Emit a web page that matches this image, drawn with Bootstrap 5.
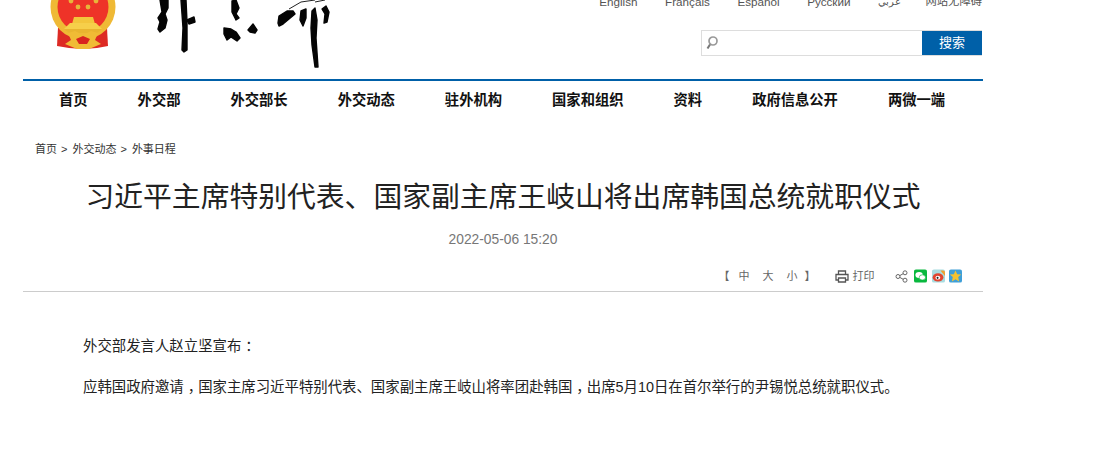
<!DOCTYPE html>
<html lang="zh-CN">
<head>
    <meta charset="UTF-8">
    <meta name="viewport" content="width=device-width, initial-scale=1.0">
    <title>习近平主席特别代表、国家副主席王岐山将出席韩国总统就职仪式</title>
    <link href="https://cdn.jsdelivr.net/npm/bootstrap@5.3.0/dist/css/bootstrap.min.css" rel="stylesheet">
    <style>
        body { font-family: "Liberation Sans", "Noto Sans CJK SC", sans-serif; color: #222; background: #fff; overflow: hidden; }
        a { color: inherit; text-decoration: none; }
        .page-wrap { width: 960px; margin-left: 23px; }
        .site-head { height: 81px; border-bottom: 2px solid #0060a8; overflow: hidden; }
        .brand-art { width: 320px; height: 79px; display: block; }
        .head-right { padding-right: 1px; }
        .lang-links { gap: 27.5px; margin-top: -7px; font-size: 11.7px; line-height: 17px; color: #555; }
        .lang-ar { font-size: 9.5px; margin-right: -3px; }
        .lang-cn { font-size: 11.3px; }
        .search-box { width: 281px; height: 26px; margin-top: 20px; border: 1px solid #ddd; border-right: 0; }
        .search-input { width: 0; border: 0; outline: 0; min-width: 0; }
        .search-btn { width: 60px; background: #0060a8; color: #fff; font-size: 13px; border: 0; padding: 0; }
        .main-menu { gap: 50px; padding-left: 36px; height: 40px; font-size: 14.3px; font-weight: 700; color: #111; }
        .crumbs { margin-top: 20px; padding-left: 12px; font-size: 11px; line-height: 16px; color: #333; }
        .crumb-sep { margin: 0 5px 0 4px; }
        .news-title { margin: 20px 0 0; font-size: 28.8px; line-height: 40px; font-weight: 400; color: #222; }
        .news-date { margin-top: 14px; font-size: 13.8px; line-height: 18px; color: #777; }
        .tool-row { height: 31px; padding-right: 21px; margin-top: 12px; border-bottom: 1px solid #ccc; font-size: 11px; color: #666; }
        .size-links { gap: 13px; margin-right: 19px; }
        .bracket-l { margin-right: -4px; }
        .bracket-r { margin-left: -6px; }
        .print-link { gap: 4px; margin-right: 20px; }
        .share-icons { gap: 4.5px; }
        .share-mark { margin-right: 2px; }
        .news-body { padding: 44px 0 0 60px; font-size: 14.4px; line-height: 21px; color: #222; }
        .news-body p { margin-bottom: 20px; }
        .mid-punct { padding-left: 4px; margin-right: -4px; }
    </style>
</head>
<body>
    <div class="page-wrap">
        <header class="site-head d-flex justify-content-between">
            <svg class="brand-art" viewBox="0 0 320 79" aria-label="外交部">
                <!-- emblem -->
                <path d="M35 28 L34 46 L46 48 L60 49 L74 48 L85 46 L84 28 Z" fill="#dd2a24"/>
                <circle cx="60" cy="7" r="32.5" fill="#efb935"/>
                <circle cx="60" cy="7" r="25.5" fill="#ee3328"/>
                <path d="M51 17 H70 L72 24 H51 L49 24Z" fill="#f3c53c"/>
                <path d="M47 23 H73 L79 29 H41Z" fill="#f6cf4a"/>
                <path d="M41 29 H79 L74 33 H46Z" fill="#e9b42f"/>
                <path d="M45 33 L52 31 L60 35 L68 31 L75 33 L72 40 L78 44 L66 49 L54 49 L42 44 L48 40Z" fill="#f0bb35"/>
                <path d="M53 39 L60 36 L67 39 L64 44 H56Z" fill="#d8231f"/>
                <g fill="#e7b53a">
                    <circle cx="48" cy="1" r="2.4"/><circle cx="55" cy="7" r="2.4"/><circle cx="65" cy="7" r="2.4"/><circle cx="73" cy="1" r="2.4"/>
                </g>
                <!-- calligraphy logo -->
                <g fill="#050505" stroke="#050505" stroke-width="1.4" stroke-linejoin="round">
                    <path d="M137 0 L145 0 L145 8 L142 14 L144 20 L142 28 L137 32 L135 29 L137 22 L135 18 L139 12Z"/>
                    <path d="M158 0 L163 0 L164 22 L164 50 L161 52 L159 50 L160 28Z"/>
                    <path d="M164 20 L171 17 L172 22 L166 24Z"/>
                    <path d="M209 1 L213 0 L216 8 L213 14 L216 18 L213 20 L209 12Z"/>
                    <path d="M201 28 L208 29 L213 32 L217 38 L214 41 L208 37 L204 40 L201 34Z"/>
                    <path d="M225 30 L230 24 L234 30 L232 33 L227 32Z"/>
                    <path d="M255 23 L256 16 L264 11 L270 11 L272 14 L266 19 L260 24 L256 26Z"/>
                    <path d="M278 11 L283 9 L283 18 L280 26 L277 20Z"/>
                    <path d="M289 11 L292 8 L294 20 L293 38 L295 67 L292 67 L289 45 L288 28Z"/>
                    <path d="M299 9 L303 6 L306 12 L304 22 L301 23 L302 14Z"/>
                </g>
                <path d="M266 9 L278 2 L292 0 M292 2 L302 0" stroke="#222" stroke-width="1" fill="none"/>
            </svg>
            <div class="head-right d-flex flex-column align-items-end">
                <nav class="lang-links d-flex">
                    <a href="#">English</a><a href="#">Français</a><a href="#">Español</a><a href="#">Русский</a><a class="lang-ar" href="#">عربي</a><a class="lang-cn" href="#">网站无障碍</a>
                </nav>
                <form class="search-box d-flex">
                    <svg class="ms-1 mt-1 flex-shrink-0" width="16" height="16" viewBox="0 0 16 16"><circle cx="7" cy="6" r="4" fill="none" stroke="#999" stroke-width="1.7"/><path d="M4 9.5 L1.5 13.5" stroke="#777" stroke-width="2"/></svg>
                    <input class="search-input flex-grow-1" type="text" aria-label="搜索">
                    <button class="search-btn flex-shrink-0" type="button">搜索</button>
                </form>
            </div>
        </header>

        <nav class="main-menu d-flex align-items-center">
            <a href="#">首页</a><a href="#">外交部</a><a href="#">外交部长</a><a href="#">外交动态</a><a href="#">驻外机构</a><a href="#">国家和组织</a><a href="#">资料</a><a href="#">政府信息公开</a><a href="#">两微一端</a>
        </nav>

        <div class="crumbs"><a href="#">首页</a><span class="crumb-sep">&gt;</span><a href="#">外交动态</a><span class="crumb-sep">&gt;</span><a href="#">外事日程</a></div>

        <h1 class="news-title text-center">习近平主席特别代表、国家副主席王岐山将出席韩国总统就职仪式</h1>
        <div class="news-date text-center">2022-05-06 15:20</div>

        <div class="tool-row d-flex justify-content-end align-items-center">
            <div class="size-links d-flex"><span class="bracket-l">【</span><a href="#">中</a><a href="#">大</a><a href="#">小</a><span class="bracket-r">】</span></div>
            <a class="print-link d-flex align-items-center" href="#">
                <svg width="14" height="13" viewBox="0 0 14 13"><path d="M3.5 4 V1 H10.5 V4 M3.5 10 H1 V4.5 H13 V10 H10.5 M3.5 8 H10.5 V12 H3.5Z" fill="none" stroke="#555" stroke-width="1.3"/></svg>
                <span>打印</span>
            </a>
            <div class="share-icons d-flex align-items-center">
                <svg class="share-mark" width="13" height="13" viewBox="0 0 13 13"><g fill="none" stroke="#666"><circle cx="3" cy="6.5" r="2"/><circle cx="10" cy="2.8" r="2"/><circle cx="10" cy="10.2" r="2"/><path d="M4.8 5.6 L8.2 3.7 M4.8 7.4 L8.2 9.3"/></g></svg>
                <svg width="13" height="14" viewBox="0 0 14 14"><rect width="14" height="14" rx="2" fill="#09b83e"/><ellipse cx="5.5" cy="6" rx="4" ry="3.3" fill="#fff"/><ellipse cx="9" cy="8.5" rx="3.4" ry="2.8" fill="#fff" stroke="#09b83e" stroke-width=".7"/></svg>
                <svg width="13" height="14" viewBox="0 0 14 14"><rect width="14" height="14" rx="2" fill="#a8dce0"/><path d="M9 1 H12 A2 2 0 0 1 14 3 V7 Z" fill="#f0a030"/><ellipse cx="6.5" cy="8.5" rx="5.8" ry="4.4" fill="#e2442f"/><ellipse cx="6.3" cy="8.8" rx="2.6" ry="2.1" fill="#fff"/><circle cx="6" cy="9" r="1.1" fill="#222"/></svg>
                <svg width="13" height="14" viewBox="0 0 14 14"><rect width="14" height="14" rx="2" fill="#3f9fd8"/><path d="M7 1 L8.8 5 L13.2 5.4 L9.9 8.2 L10.9 12.8 L7 10.4 L3.1 12.8 L4.1 8.2 L.8 5.4 L5.2 5Z" fill="#f6c22f"/></svg>
            </div>
        </div>

        <div class="news-body">
            <p>外交部发言人赵立坚宣布<span class="mid-punct">：</span></p>
            <p>应韩国政府邀请<span class="mid-punct">，</span>国家主席习近平特别代表、国家副主席王岐山将率团赴韩国<span class="mid-punct">，</span>出席5月10日在首尔举行的尹锡悦总统就职仪式。</p>
        </div>
    </div>
    <script src="https://cdn.jsdelivr.net/npm/bootstrap@5.3.0/dist/js/bootstrap.bundle.min.js"></script>
</body>
</html>
